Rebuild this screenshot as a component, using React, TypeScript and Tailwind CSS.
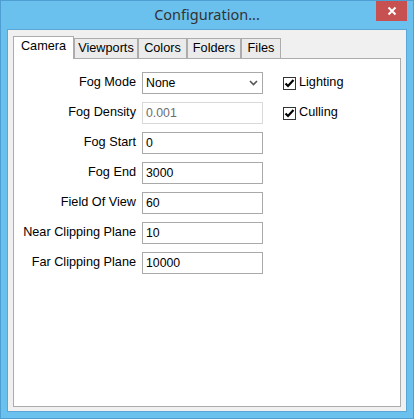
import React from "react";

const font = { fontFamily: '"Liberation Sans", Arial, sans-serif' };

function Check() {
  return (
    <div className="w-[13px] h-[13px] border border-[#333333] bg-white flex items-center justify-center">
      <svg width="11" height="11" viewBox="0 0 11 11">
        <path d="M1.5 5.5 L4 8 L9.5 2" fill="none" stroke="#000" strokeWidth="2.2" />
      </svg>
    </div>
  );
}

function Field({ value, disabled }: { value: string; disabled?: boolean }) {
  return (
    <div
      className={
        "w-[121px] h-[22px] bg-white border flex items-center pl-[3px] text-[12.3px] " +
        (disabled ? "border-[#d9d9d9] text-[#6d6d6d]" : "border-[#a9a9a9] text-black")
      }
    >
      {value}
    </div>
  );
}

export default function App() {
  const rows: { label: string; value: string; disabled?: boolean }[] = [
    { label: "Fog Density", value: "0.001", disabled: true },
    { label: "Fog Start", value: "0" },
    { label: "Fog End", value: "3000" },
    { label: "Field Of View", value: "60" },
    { label: "Near Clipping Plane", value: "10" },
    { label: "Far Clipping Plane", value: "10000" },
  ];
  const tabs = [
    { name: "Viewports", w: "w-[64px]" },
    { name: "Colors", w: "w-[49px]" },
    { name: "Folders", w: "w-[54px]" },
    { name: "Files", w: "w-[40px]" },
  ];
  return (
    <div
      className="w-[414px] h-[419px] bg-[#6bc1ee] border border-[#4f9ed2] flex flex-col"
      style={font}
    >
      <div className="h-[28px] relative flex items-center justify-center">
        <span
          className="text-[#333333]"
          style={{ fontFamily: '"Noto Sans", "Liberation Sans", sans-serif', fontSize: "14.5px" }}
        >
          Configuration...
        </span>
        <div className="absolute top-0 right-[6px] w-[31px] h-[20px] bg-[#c75050] flex items-center justify-center">
          <svg width="10" height="10" viewBox="0 0 10 10">
            <path d="M1.5 1.5 L8.5 8.5 M8.5 1.5 L1.5 8.5" stroke="#fff" strokeWidth="2" />
          </svg>
        </div>
      </div>
      <div className="mx-[6px] border border-[#5aa6d6] bg-[#f0f0f0] h-[383px] pl-[5px] pr-[5px] pt-[6px] pb-[4px] flex flex-col">
        <div className="h-[22px] flex items-end text-[12.7px] text-black">
          <div className="relative z-10 w-[61px] h-[23px] -mb-px bg-white border border-b-0 border-[#acacac] flex items-center justify-center pb-[2px]">
            Camera
          </div>
          {tabs.map((t) => (
            <div
              key={t.name}
              className={
                t.w +
                " h-[20px] bg-[#ebebeb] border border-b-0 border-[#acacac] flex items-center justify-center"
              }
            >
              {t.name}
            </div>
          ))}
        </div>
        <div className="flex-1 bg-white border border-[#acacac] pt-[13px] text-[12.7px] text-black">
          <div className="grid grid-cols-[122px_121px_auto] gap-y-[8px] gap-x-[6px] auto-rows-[22px]">
            <div className="flex items-center justify-end">Fog Mode</div>
            <div className="w-[121px] h-[22px] bg-white border border-[#a9a9a9] flex items-center pl-[3px] pr-[4px] justify-between text-[12.3px]">
              <span>None</span>
              <svg width="9" height="6" viewBox="0 0 9 6">
                <path d="M1 1 L4.5 4.5 L8 1" fill="none" stroke="#555" strokeWidth="1.6" />
              </svg>
            </div>
            <div className="flex items-center ml-[14px] gap-[3px]">
              <Check />
              <span>Lighting</span>
            </div>
            {rows.map((r, i) => (
              <React.Fragment key={r.label}>
                <div className="flex items-center justify-end">{r.label}</div>
                <Field value={r.value} disabled={r.disabled} />
                {i === 0 ? (
                  <div className="flex items-center ml-[14px] gap-[3px]">
                    <Check />
                    <span>Culling</span>
                  </div>
                ) : (
                  <div />
                )}
              </React.Fragment>
            ))}
          </div>
        </div>
      </div>
    </div>
  );
}
